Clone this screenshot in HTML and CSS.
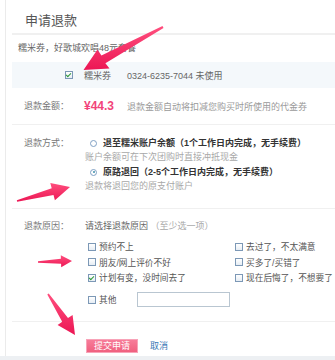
FILE: index.html
```html
<!DOCTYPE html>
<html lang="zh-CN">
<head>
    <meta charset="UTF-8">
    <meta name="viewport" content="width=device-width, initial-scale=1.0">
    <title>申请退款</title>
    <link rel="stylesheet" href="styles.css">
</head>
<body>

    <div class="page">
        <div class="panel">
            <h2 class="title">申请退款</h2>
            <div class="deal-name">糯米券，好歌城欢唱48元套餐</div>

            <div class="coupon-row">
                <span class="cb checked"></span>
                <span class="coupon-type">糯米券</span>
                <span class="coupon-code">0324-6235-7044 未使用</span>
            </div>

            <div class="field field-amount">
                <div class="label">退款金额：</div>
                <div class="value">
                    <span class="price">¥44.3</span>
                    <span class="hint">退款金额自动将扣减您购买时所使用的代金券</span>
                </div>
            </div>

            <div class="field field-method">
                <div class="label">退款方式：</div>
                <div class="value">
                    <div class="option">
                        <div class="option-main"><span class="radio"></span>退至糯米账户余额（1个工作日内完成，无手续费）</div>
                        <div class="option-sub">账户余额可在下次团购时直接冲抵现金</div>
                    </div>
                    <div class="option">
                        <div class="option-main"><span class="radio selected"></span>原路退回（2-5个工作日内完成，无手续费）</div>
                        <div class="option-sub">退款将退回您的原支付账户</div>
                    </div>
                </div>
            </div>

            <div class="field field-reason">
                <div class="label">退款原因：</div>
                <div class="value">
                    <div class="prompt">请选择退款原因 <span class="muted">（至少选一项）</span></div>
                    <div class="reasons">
                        <label class="reason"><span class="cb"></span>预约不上</label>
                        <label class="reason"><span class="cb"></span>去过了，不太满意</label>
                        <label class="reason"><span class="cb"></span>朋友/网上评价不好</label>
                        <label class="reason"><span class="cb"></span>买多了/买错了</label>
                        <label class="reason"><span class="cb checked"></span>计划有变，没时间去了</label>
                        <label class="reason"><span class="cb"></span>现在后悔了，不想要了</label>
                    </div>
                    <div class="other">
                        <label class="reason"><span class="cb"></span>其他</label>
                        <input class="other-input" type="text">
                    </div>
                </div>
            </div>

            <div class="actions">
                <button class="btn-submit">提交申请</button>
                <a class="link-cancel" href="#">取消</a>
            </div>
        </div>
        <div class="strip"></div>

        <svg class="arrows" width="335" height="360" viewBox="0 0 335 360">
            <defs>
                <linearGradient id="pink" x1="0" y1="0" x2="0" y2="1">
                    <stop offset="0" stop-color="#ff4f7e"/>
                    <stop offset="1" stop-color="#ec1654"/>
                </linearGradient>
            </defs>
            <polygon fill="url(#pink)" points="162.5,26.1 101.4,55.5 97.5,49.5 83.5,70 109.5,68.5 105.4,63.2 163.5,27.9"/>
            <polygon fill="url(#pink)" points="16.8,200.2 51.7,188.2 50.3,182.9 70,187 54.9,200.3 53.5,195 17.2,201.8"/>
            <polygon fill="url(#pink)" points="38,261.2 60.9,258.8 60.8,255.3 72,261 61.2,267.3 61.1,263.8 38,262.8"/>
            <polygon fill="url(#pink)" points="48.7,293.6 68,318 72.6,314.9 75,335 57.6,324.9 62.2,321.8 47.3,294.4"/>
        </svg>
    </div>

</body>
</html>
```

FILE: styles.css
```css
body {
    margin: 0;
    padding: 0;
    background-color: #fff;
    font-family: "Liberation Sans", "Noto Sans CJK SC", sans-serif;
    font-size: 9px;
    color: #666;
}

.page {
    position: relative;
    width: 335px;
    height: 360px;
    overflow: hidden;
}

.panel {
    margin-left: 5px;
    border-left: 1px solid #ebebeb;
    padding-left: 6px;
    height: 356px;
}

.title {
    margin: 0;
    padding: 9px 0 0 13px;
    line-height: 24px;
    font-size: 13px;
    font-weight: normal;
    color: #555;
    border-bottom: 2px solid #f0f0f0;
}

.deal-name {
    padding: 6px 0 0 6px;
    line-height: 14px;
    margin-bottom: 7px;
}

.coupon-row {
    display: flex;
    align-items: center;
    height: 26px;
    padding-left: 53px;
    background-color: #f4f8fb;
}

.coupon-type {
    margin-left: 11px;
}

.coupon-code {
    margin-left: 16px;
}

/* checkbox + radio */
.cb {
    position: relative;
    display: inline-block;
    box-sizing: border-box;
    width: 8px;
    height: 8px;
    border: 1px solid #7c98b6;
    background: linear-gradient(#fff, #e6edf4);
    flex-shrink: 0;
}

.cb.checked::after {
    content: "";
    position: absolute;
    left: 1px;
    top: 0;
    width: 2px;
    height: 4px;
    border-right: 1px solid #2f9a3a;
    border-bottom: 1px solid #2f9a3a;
    transform: rotate(45deg);
}

.radio {
    position: relative;
    display: inline-block;
    box-sizing: border-box;
    width: 7px;
    height: 7px;
    margin: 0 6px 0 5px;
    border: 1px solid #7fa0c4;
    border-radius: 50%;
    background-color: #fff;
    flex-shrink: 0;
}

.radio.selected::after {
    content: "";
    position: absolute;
    left: 1.5px;
    top: 1.5px;
    width: 2px;
    height: 2px;
    border-radius: 50%;
    background-color: #3d8fa8;
}

.field {
    display: flex;
    padding-left: 12px;
}

.label {
    width: 61px;
    flex-shrink: 0;
    line-height: 14px;
    color: #777;
}

.value {
    flex: 1;
    white-space: nowrap;
}

.field-amount {
    padding-top: 11px;
    padding-bottom: 11px;
    border-bottom: 1px solid #f0f0f0;
}

.field-amount .value {
    display: flex;
    align-items: center;
    height: 14px;
    margin-left: -1px;
}

.price {
    font-size: 12px;
    font-weight: bold;
    color: #f2447a;
}

.hint {
    margin-left: 13px;
    color: #9a9a9a;
}

.field-method {
    padding-top: 11px;
    padding-bottom: 15px;
    border-bottom: 1px solid #f0f0f0;
}

.option + .option {
    margin-top: 1px;
}

.option-main {
    display: flex;
    align-items: center;
    line-height: 14px;
    font-weight: bold;
    color: #333;
}

.option-sub {
    line-height: 14px;
    color: #a8a8a8;
}

.field-reason {
    padding-top: 10px;
    padding-bottom: 13px;
    border-bottom: 1px solid #f0f0f0;
}

.prompt {
    line-height: 14px;
}

.muted {
    color: #a8a8a8;
}

.reasons {
    display: grid;
    grid-template-columns: 147px 1fr;
    grid-auto-rows: 15.5px;
    margin: 6px 0 0 3px;
}

.reason {
    display: flex;
    align-items: center;
    gap: 3px;
    color: #555;
    white-space: nowrap;
    font-size: 8.7px;
}

.other {
    display: flex;
    align-items: center;
    height: 16px;
    margin: 6px 0 0 3px;
}

.other-input {
    box-sizing: border-box;
    width: 93px;
    height: 15px;
    margin: 0 0 0 21px;
    padding: 0;
    border: 1px solid #b9c6d1;
    background-color: #fff;
}

.actions {
    display: flex;
    align-items: center;
    padding: 17px 0 0 74px;
}

.btn-submit {
    width: 52px;
    height: 14px;
    padding: 0;
    border: 1px solid #f8a3b8;
    background: linear-gradient(#f77c99, #f0607f);
    color: #fff;
    font-family: inherit;
    font-size: 9px;
    line-height: 12px;
}

.link-cancel {
    margin-left: 12px;
    color: #3a78b5;
    text-decoration: none;
}

.strip {
    height: 4px;
    background-color: #edf0f3;
}

.arrows {
    position: absolute;
    left: 0;
    top: 0;
    pointer-events: none;
}
```
